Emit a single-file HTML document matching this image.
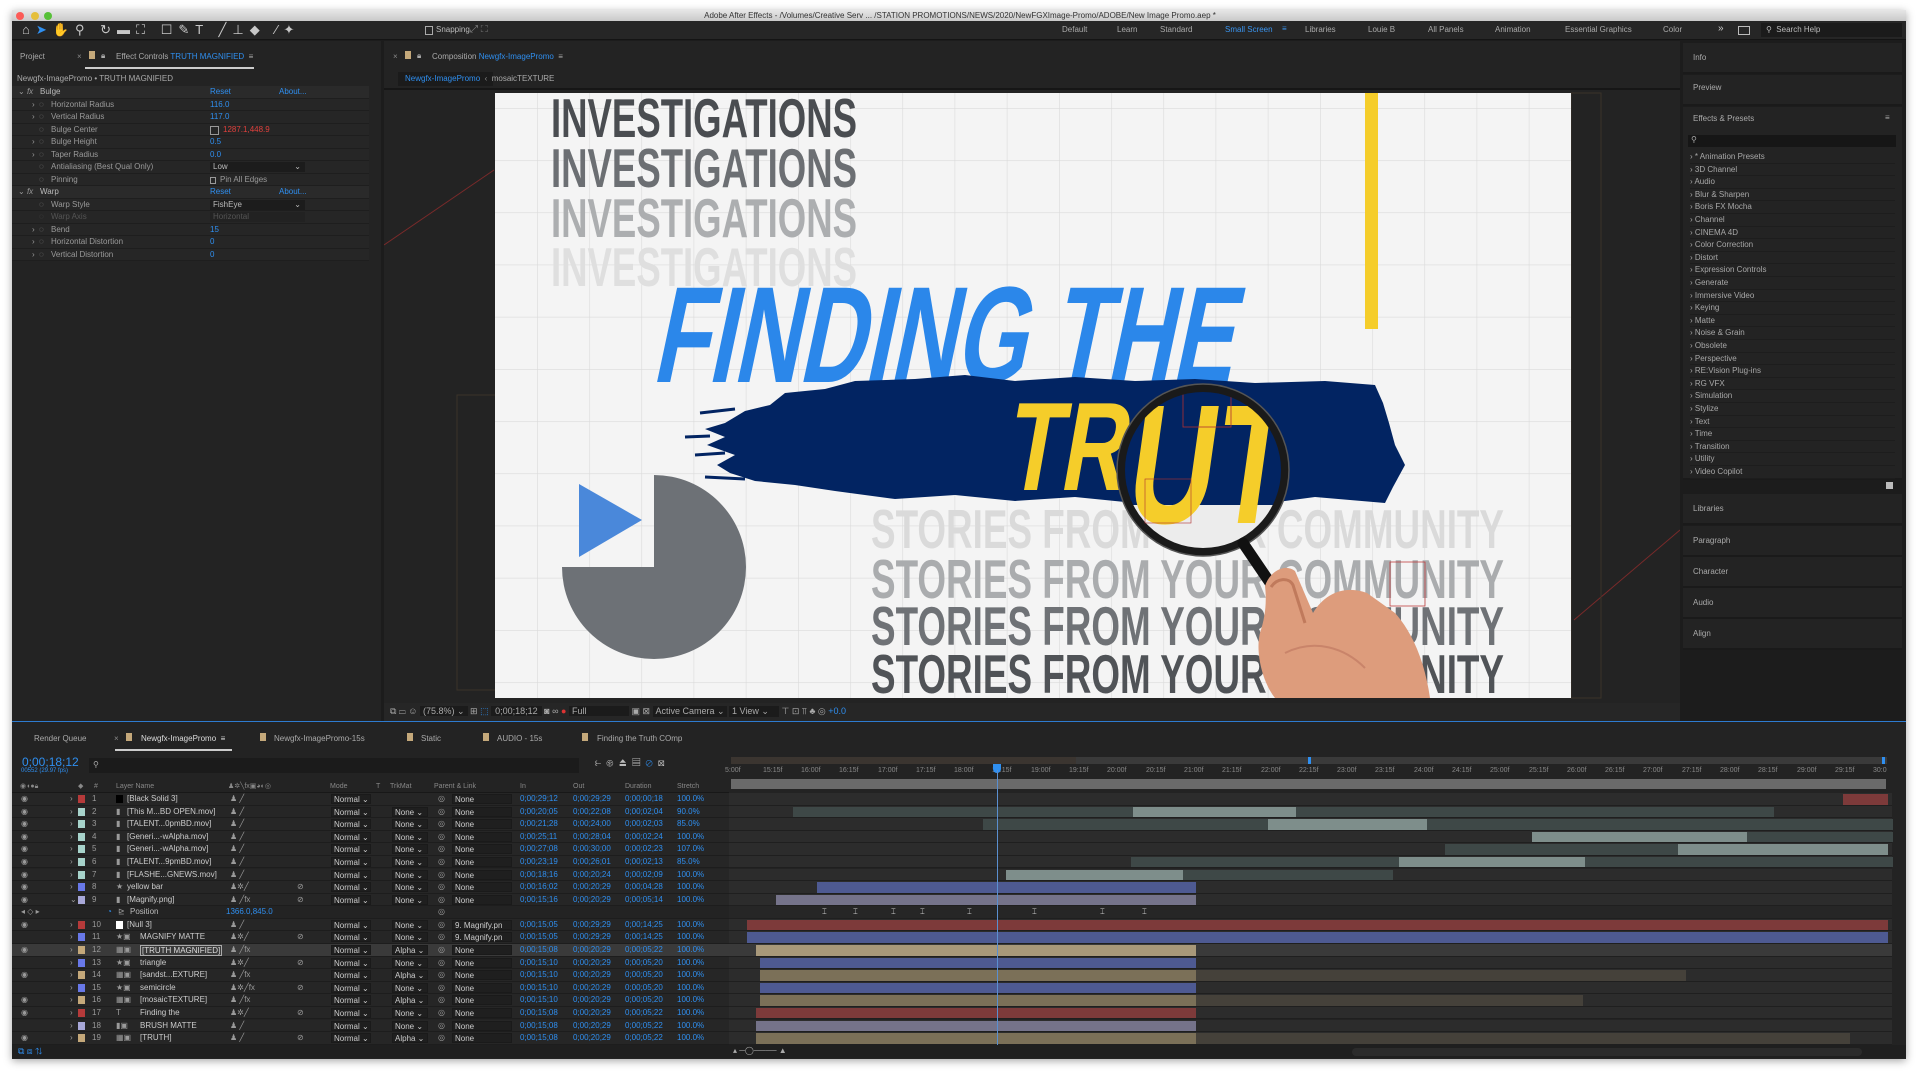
<!DOCTYPE html>
<html><head><meta charset="utf-8">
<style>
*{margin:0;padding:0;box-sizing:border-box}
body{width:1920px;height:1074px;background:#fff;position:relative;overflow:hidden;font-family:"Liberation Sans",sans-serif;font-size:8px;color:#9a9a9a}
.a{position:absolute;white-space:nowrap}
.win{position:absolute;left:12px;top:10px;width:1894px;height:1049px;background:#1c1c1c;box-shadow:0 2px 8px rgba(0,0,0,.35)}
.b{color:#2f8ff0}
.lr{position:absolute;left:12px;width:717px;height:12.58px;line-height:12.58px;background:#262626;border-bottom:1px solid #1d1d1d}
.gr{position:absolute;left:729px;width:1163px;height:12.58px;background:#2c2c2c;border-bottom:1px solid #1f1f1f}
.bar{position:absolute;top:1px;height:10.5px}
.lr span{position:absolute;white-space:nowrap}
.sw{width:7px;height:8px;top:2px}
.dd{border:1px solid #1a1a1a;background:#1f1f1f;height:10px;top:1px;line-height:9px;padding-left:2px;color:#ccc}
.lr .e{left:9px}.lr .t{left:58px}.lr .c{left:66px}.lr .n{left:80px}.lr .i{left:104px}.lr .nm{left:115px;color:#ccc}.lr .nm2{left:128px;color:#ccc}
.lr .s{left:218px}.lr .m{left:319px;width:40px}.lr .k{left:380px;width:36px}.lr .p{left:426px}.lr .pd{left:440px;width:60px}
.lr .ti{left:508px;color:#2f8ff0}.lr .to{left:561px;color:#2f8ff0}.lr .td{left:613px;color:#2f8ff0}.lr .ts{left:665px;color:#2f8ff0}
.rp{position:absolute;left:1683px;width:219px;border-bottom:2px solid #1a1a1a;background:#232323}
.ep{position:absolute;left:1690px;width:205px;height:12.6px;line-height:12.6px;border-bottom:1px solid #1d1d1d;color:#a8a8a8}
.ec{position:absolute;left:12px;width:357px;height:12.57px;line-height:12.57px;background:#262626;border-bottom:1px solid #1e1e1e}
.ec span{position:absolute;white-space:nowrap}
</style></head><body>
<div class="win"></div>
<div class="a" style="left:12px;top:10px;width:1894px;height:11px;background:linear-gradient(#e6e6e6,#c9c9c9)"></div>
<div class="a" style="left:16px;top:12px;width:8px;height:8px;border-radius:50%;background:#fc5b57"></div>
<div class="a" style="left:31px;top:12px;width:8px;height:8px;border-radius:50%;background:#e5bf3c"></div>
<div class="a" style="left:44px;top:12px;width:8px;height:8px;border-radius:50%;background:#57c038"></div>
<div class="a" style="left:0;width:1920px;top:10px;text-align:center;font-size:8px;color:#333;line-height:11px">Adobe After Effects - /Volumes/Creative Serv ... /STATION PROMOTIONS/NEWS/2020/NewFGXImage-Promo/ADOBE/New Image Promo.aep *</div>
<div class="a" style="left:12px;top:21px;width:1894px;height:19px;background:#262626;border-bottom:1px solid #141414"></div>
<div class="a" style="left:22px;top:22px;font-size:13px;color:#c8c8c8;letter-spacing:6px">⌂<span style="color:#2f8ff0">➤</span>✋⚲ ↻▬⛶ ☐✎T ╱⊥◆ ⁄✦</div>
<div class="a" style="left:425px;top:26px;width:8px;height:9px;border:1px solid #aaa"></div>
<div class="a" style="left:436px;top:25px;color:#bbb">Snapping</div>
<div class="a" style="left:470px;top:24px;color:#888;font-size:10px">⤢ ⛶</div>
<div class="a" style="left:1062px;top:25px;color:#aaa">Default</div>
<div class="a" style="left:1117px;top:25px;color:#aaa">Learn</div>
<div class="a" style="left:1160px;top:25px;color:#aaa">Standard</div>
<div class="a" style="left:1225px;top:25px;color:#3a95f0">Small Screen</div>
<div class="a" style="left:1282px;top:24px;color:#3a95f0">≡</div>
<div class="a" style="left:1305px;top:25px;color:#aaa">Libraries</div>
<div class="a" style="left:1368px;top:25px;color:#aaa">Louie B</div>
<div class="a" style="left:1428px;top:25px;color:#aaa">All Panels</div>
<div class="a" style="left:1495px;top:25px;color:#aaa">Animation</div>
<div class="a" style="left:1565px;top:25px;color:#aaa">Essential Graphics</div>
<div class="a" style="left:1663px;top:25px;color:#aaa">Color</div>
<div class="a" style="left:1718px;top:23px;color:#ccc;font-size:10px">»</div>
<div class="a" style="left:1738px;top:26px;width:12px;height:9px;border:1px solid #bbb"></div>
<div class="a" style="left:1761px;top:23px;width:141px;height:14px;background:#1b1b1b"></div>
<div class="a" style="left:1766px;top:25px;color:#bbb">⚲&nbsp; Search Help</div>

<!-- LEFT PANEL -->
<div class="a" style="left:12px;top:41px;width:369px;height:680px;background:#232323"></div>
<div class="a" style="left:20px;top:52px;color:#aaa">Project</div>
<div class="a" style="left:77px;top:52px;color:#888">×</div>
<div class="a" style="left:89px;top:51px;width:6px;height:8px;background:#c4a87a"></div>
<div class="a" style="left:101px;top:51px;color:#aaa">&#x1F512;&#xFE0E;</div>
<div class="a" style="left:116px;top:52px;color:#aaa">Effect Controls <span class="b">TRUTH MAGNIFIED</span> &nbsp;≡</div>
<div class="a" style="left:85px;top:67px;width:169px;height:2px;background:#ccc"></div>
<div class="a" style="left:17px;top:74px;color:#aaa">Newgfx-ImagePromo • TRUTH MAGNIFIED</div>
<div class="ec" style="top:86px;background:#2a2a2a"><span style="left:6px">⌄ <i>fx</i></span><span style="left:28px;color:#bbb">Bulge</span><span style="left:198px" class="b">Reset</span><span style="left:267px" class="b">About...</span></div>
<div class="ec" style="top:98.5px"><span style="left:20px">›</span><span style="left:27px">◌</span><span style="left:39px">Horizontal Radius</span><span style="left:198px" class="b">116.0</span></div>
<div class="ec" style="top:111px"><span style="left:20px">›</span><span style="left:27px">◌</span><span style="left:39px">Vertical Radius</span><span style="left:198px" class="b">117.0</span></div>
<div class="ec" style="top:123.5px"><span style="left:27px">◌</span><span style="left:39px">Bulge Center</span><span style="left:198px;top:2px;width:9px;height:9px;border:1px solid #999"></span><span style="left:211px;color:#e0403c">1287.1,448.9</span></div>
<div class="ec" style="top:136px"><span style="left:20px">›</span><span style="left:27px">◌</span><span style="left:39px">Bulge Height</span><span style="left:198px" class="b">0.5</span></div>
<div class="ec" style="top:148.5px"><span style="left:20px">›</span><span style="left:27px">◌</span><span style="left:39px">Taper Radius</span><span style="left:198px" class="b">0.0</span></div>
<div class="ec" style="top:161px"><span style="left:27px">◌</span><span style="left:39px">Antialiasing (Best Qual Only)</span><span style="left:198px;top:1px;width:95px;height:10px;background:#1c1c1c;line-height:10px;padding-left:3px;color:#bbb">Low<b style="position:absolute;right:4px;font-weight:normal">⌄</b></span></div>
<div class="ec" style="top:173.5px"><span style="left:27px">◌</span><span style="left:39px">Pinning</span><span style="left:198px;top:3px;width:6px;height:7px;border:1px solid #999"></span><span style="left:208px">Pin All Edges</span></div>
<div class="ec" style="top:186px;background:#2a2a2a"><span style="left:6px">⌄ <i>fx</i></span><span style="left:28px;color:#bbb">Warp</span><span style="left:198px" class="b">Reset</span><span style="left:267px" class="b">About...</span></div>
<div class="ec" style="top:198.5px"><span style="left:27px">◌</span><span style="left:39px">Warp Style</span><span style="left:198px;top:1px;width:95px;height:10px;background:#1c1c1c;line-height:10px;padding-left:3px;color:#bbb">FishEye<b style="position:absolute;right:4px;font-weight:normal">⌄</b></span></div>
<div class="ec" style="top:211px;color:#555"><span style="left:27px">◌</span><span style="left:39px">Warp Axis</span><span style="left:198px;top:1px;width:95px;height:10px;background:#222;line-height:10px;padding-left:3px">Horizontal</span></div>
<div class="ec" style="top:223.5px"><span style="left:20px">›</span><span style="left:27px">◌</span><span style="left:39px">Bend</span><span style="left:198px" class="b">15</span></div>
<div class="ec" style="top:236px"><span style="left:20px">›</span><span style="left:27px">◌</span><span style="left:39px">Horizontal Distortion</span><span style="left:198px" class="b">0</span></div>
<div class="ec" style="top:248.5px"><span style="left:20px">›</span><span style="left:27px">◌</span><span style="left:39px">Vertical Distortion</span><span style="left:198px" class="b">0</span></div>

<!-- COMP PANEL -->
<div class="a" style="left:384px;top:41px;width:1296px;height:680px;background:#232323"></div>
<div class="a" style="left:393px;top:52px;color:#888">×</div>
<div class="a" style="left:405px;top:51px;width:6px;height:8px;background:#c4a87a"></div>
<div class="a" style="left:417px;top:51px;color:#aaa">&#x1F512;&#xFE0E;</div>
<div class="a" style="left:432px;top:52px;color:#aaa">Composition <span class="b">Newgfx-ImagePromo</span> &nbsp;≡</div>
<div class="a" style="left:398px;top:72px;width:95px;height:14px;background:#1b1b1b"></div>
<div class="a" style="left:405px;top:74px"><span class="b">Newgfx-ImagePromo</span> &nbsp;<span style="color:#888">‹</span>&nbsp; <span style="color:#aaa">mosaicTEXTURE</span></div>
<div class="a" style="left:384px;top:88px;width:1296px;height:2px;background:#161616"></div>
<svg class="a" style="left:384px;top:90px" width="1296" height="612">
 <line x1="0" y1="155" x2="110" y2="80" stroke="#7a2a2a" stroke-width="1"/>
 <line x1="1190" y1="530" x2="1296" y2="440" stroke="#7a2a2a" stroke-width="1"/>
 <rect x="73" y="305" width="40" height="295" fill="none" stroke="#3b3328" stroke-width="1"/>
 <rect x="1187" y="3" width="30" height="605" fill="none" stroke="#3b3328" stroke-width="1"/>
</svg>
<svg class="a" style="left:495px;top:93px" width="1076" height="605" viewBox="0 0 1076 605">
 <defs>
  <pattern id="g" x="42" y="15" width="52.2" height="52.2" patternUnits="userSpaceOnUse"><path d="M0 0H52.2M0 0V52.2" stroke="#dadada" stroke-width="1.2" fill="none"/></pattern>
  <clipPath id="lens"><circle cx="708" cy="377" r="80"/></clipPath>
 </defs>
 <rect width="1076" height="605" fill="#f4f4f4"/>
 <rect width="1076" height="605" fill="url(#g)"/>
 <g font-family="Liberation Sans" font-weight="bold" font-size="55">
  <text x="56" y="44" textLength="306" lengthAdjust="spacingAndGlyphs" fill="#4a4d51">INVESTIGATIONS</text>
  <text x="56" y="94" textLength="306" lengthAdjust="spacingAndGlyphs" fill="#6c6f73">INVESTIGATIONS</text>
  <text x="56" y="144" textLength="306" lengthAdjust="spacingAndGlyphs" fill="#acaeb0">INVESTIGATIONS</text>
  <text x="56" y="193" textLength="306" lengthAdjust="spacingAndGlyphs" fill="#dfdfdf">INVESTIGATIONS</text>
 </g>
 <rect x="870" y="0" width="13" height="236" fill="#f5cd2a"/>
 <path d="M159 474 L159 382 A92 92 0 1 1 67 474 Z" fill="#6d7176"/>
 <polygon points="84,391 147,427 84,464" fill="#4a88da"/>
 <g font-family="Liberation Sans" font-weight="bold" font-size="55">
  <text x="376" y="455" textLength="633" lengthAdjust="spacingAndGlyphs" fill="#dadada">STORIES FROM YOUR COMMUNITY</text>
  <text x="376" y="505" textLength="633" lengthAdjust="spacingAndGlyphs" fill="#aaacae">STORIES FROM YOUR COMMUNITY</text>
  <text x="376" y="552" textLength="633" lengthAdjust="spacingAndGlyphs" fill="#6f7276">STORIES FROM YOUR COMMUNITY</text>
  <text x="376" y="600" textLength="633" lengthAdjust="spacingAndGlyphs" fill="#505357">STORIES FROM YOUR COMMUNITY</text>
 </g>
 <g transform="translate(156,289) skewX(-12)">
  <text x="0" y="0" font-family="Liberation Sans" font-weight="bold" font-size="137" textLength="580" lengthAdjust="spacingAndGlyphs" fill="#2b87ea">FINDING THE</text>
 </g>
 <path d="M230 330 L250 318 L275 312 L290 300 L330 296 L360 288 L420 286 L470 282 L520 288 L580 284 L640 288 L700 286 L760 290 L830 288 L880 292 L888 310 L894 330 L900 352 L910 372 L898 394 L890 410 L820 404 L760 412 L700 402 L640 410 L580 404 L520 408 L460 402 L400 406 L340 398 L300 392 L260 388 L235 380 L222 372 L240 362 L212 352 L230 344 L210 336 Z" fill="#022462"/>
 <path d="M205 320 L240 316 M200 362 L230 360 M210 384 L250 386 M190 344 L215 343" stroke="#022462" stroke-width="3"/>
 <g transform="translate(508,397) skewX(-10)">
  <text x="0" y="0" font-family="Liberation Sans" font-weight="bold" font-size="126" textLength="120" lengthAdjust="spacingAndGlyphs" fill="#f5cd2a">TR</text>
 </g>
 <g clip-path="url(#lens)">
  <rect x="620" y="290" width="180" height="180" fill="#022462"/>
  <rect x="620" y="412" width="180" height="60" fill="#ececec"/>
  <g transform="translate(628,430) skewX(-8)">
   <text x="0" y="0" font-family="Liberation Sans" font-weight="bold" font-size="170" textLength="160" lengthAdjust="spacingAndGlyphs" fill="#f5cd2a">UT</text>
  </g>
  <rect x="688" y="292" width="48" height="42" fill="none" stroke="#b03030" stroke-width="0.8"/>
 </g>
 <circle cx="708" cy="377" r="82" fill="none" stroke="#1a1a1a" stroke-width="8"/>
 <circle cx="708" cy="377" r="86" fill="none" stroke="#555" stroke-width="1.5"/>
 <path d="M748 450 L782 500" stroke="#111" stroke-width="11" stroke-linecap="round"/>
 <path d="M770 493 C775 478 790 470 800 478 L818 520 C830 500 850 492 872 500 L900 520 C918 540 930 570 935 605 L780 605 C768 590 760 560 765 540 C770 525 772 510 770 493 Z" fill="#dd9c7c"/>
 <path d="M776 494 C782 485 794 484 798 492 L810 530" stroke="#c07a5c" stroke-width="3" fill="none"/>
 <path d="M790 560 C820 545 850 555 870 575" stroke="#c9846a" stroke-width="2" fill="none"/>
 <rect x="650" y="386" width="46" height="44" fill="none" stroke="#b03030" stroke-width="0.6"/>
 <rect x="895" y="469" width="35" height="44" fill="none" stroke="#c04040" stroke-width="0.8"/>
</svg>
<div class="a" style="left:384px;top:703px;width:1296px;height:18px;background:#262626"></div>
<div class="a" style="left:390px;top:706px;color:#aaa;font-size:9px">⧉ ▭ ☺ <span style="background:#1b1b1b;padding:0 3px">(75.8%) ⌄</span> ⊞ <span class="b">⬚</span> <span style="background:#1b1b1b;padding:0 4px">0;00;18;12</span> ◙ ∞ <span style="color:#d33">●</span> <span style="display:inline-block;width:60px;background:#1b1b1b;padding-left:3px">Full</span> ▣ ⊠ <span style="display:inline-block;width:74px;background:#1b1b1b;padding-left:3px">Active Camera ⌄</span> <span style="display:inline-block;width:50px;background:#1b1b1b;padding-left:3px">1 View ⌄</span> ⊤ ⊡ ⫪ ♣ ◎ <span class="b">+0.0</span></div>

<!-- RIGHT PANEL -->
<div class="a" style="left:1683px;top:41px;width:223px;height:680px;background:#1c1c1c"></div>
<div class="rp" style="top:43px;height:31px"><span class="a" style="left:10px;top:10px;color:#aaa">Info</span></div>
<div class="rp" style="top:75px;height:31px"><span class="a" style="left:10px;top:8px;color:#aaa">Preview</span></div>
<div class="rp" style="top:107px;height:373px"><span class="a" style="left:10px;top:7px;color:#aaa">Effects &amp; Presets</span><span class="a" style="left:202px;top:6px;color:#aaa">≡</span>
<div class="a" style="left:5px;top:28px;width:208px;height:12px;background:#161616"></div><span class="a" style="left:8px;top:28px;color:#aaa">⚲</span></div>
<div class="ep" style="top:151px">› * Animation Presets</div>
<div class="ep" style="top:163.6px">› 3D Channel</div>
<div class="ep" style="top:176.2px">› Audio</div>
<div class="ep" style="top:188.8px">› Blur &amp; Sharpen</div>
<div class="ep" style="top:201.4px">› Boris FX Mocha</div>
<div class="ep" style="top:214px">› Channel</div>
<div class="ep" style="top:226.6px">› CINEMA 4D</div>
<div class="ep" style="top:239.2px">› Color Correction</div>
<div class="ep" style="top:251.8px">› Distort</div>
<div class="ep" style="top:264.4px">› Expression Controls</div>
<div class="ep" style="top:277px">› Generate</div>
<div class="ep" style="top:289.6px">› Immersive Video</div>
<div class="ep" style="top:302.2px">› Keying</div>
<div class="ep" style="top:314.8px">› Matte</div>
<div class="ep" style="top:327.4px">› Noise &amp; Grain</div>
<div class="ep" style="top:340px">› Obsolete</div>
<div class="ep" style="top:352.6px">› Perspective</div>
<div class="ep" style="top:365.2px">› RE:Vision Plug-ins</div>
<div class="ep" style="top:377.8px">› RG VFX</div>
<div class="ep" style="top:390.4px">› Simulation</div>
<div class="ep" style="top:403px">› Stylize</div>
<div class="ep" style="top:415.6px">› Text</div>
<div class="ep" style="top:428.2px">› Time</div>
<div class="ep" style="top:440.8px">› Transition</div>
<div class="ep" style="top:453.4px">› Utility</div>
<div class="ep" style="top:466px">› Video Copilot</div>
<div class="a" style="left:1886px;top:482px;width:7px;height:7px;background:#bbb"></div>
<div class="rp" style="top:494px;height:31px"><span class="a" style="left:10px;top:10px;color:#aaa">Libraries</span></div>
<div class="rp" style="top:526px;height:31px"><span class="a" style="left:10px;top:10px;color:#aaa">Paragraph</span></div>
<div class="rp" style="top:557px;height:31px"><span class="a" style="left:10px;top:10px;color:#aaa">Character</span></div>
<div class="rp" style="top:588px;height:31px"><span class="a" style="left:10px;top:10px;color:#aaa">Audio</span></div>
<div class="rp" style="top:619px;height:31px"><span class="a" style="left:10px;top:10px;color:#aaa">Align</span></div>

<!-- TIMELINE -->
<div class="a" style="left:12px;top:721px;width:1894px;height:338px;background:#232323;border-top:1px solid #2d7bd0"></div>
<div class="a" style="left:34px;top:734px;color:#aaa">Render Queue</div>
<div class="a" style="left:114px;top:734px;color:#888">×</div>
<div class="a" style="left:126px;top:733px;width:6px;height:8px;background:#c4a87a"></div>
<div class="a" style="left:141px;top:734px;color:#ddd">Newgfx-ImagePromo &nbsp;≡</div>
<div class="a" style="left:115px;top:749px;width:117px;height:2px;background:#ccc"></div>
<div class="a" style="left:260px;top:733px;width:6px;height:8px;background:#c4a87a"></div><div class="a" style="left:274px;top:734px;color:#aaa">Newgfx-ImagePromo-15s</div>
<div class="a" style="left:407px;top:733px;width:6px;height:8px;background:#c4a87a"></div><div class="a" style="left:421px;top:734px;color:#aaa">Static</div>
<div class="a" style="left:483px;top:733px;width:6px;height:8px;background:#c4a87a"></div><div class="a" style="left:497px;top:734px;color:#aaa">AUDIO - 15s</div>
<div class="a" style="left:582px;top:733px;width:6px;height:8px;background:#c4a87a"></div><div class="a" style="left:597px;top:734px;color:#aaa">Finding the Truth COmp</div>
<div class="a" style="left:22px;top:755px;color:#2f8ff0;font-size:12px">0;00;18;12</div>
<div class="a" style="left:21px;top:768px;color:#2f8ff0;font-size:6px">00552 (29.97 fps)</div>
<div class="a" style="left:89px;top:758px;width:490px;height:15px;background:#1b1b1b"></div>
<div class="a" style="left:93px;top:760px;color:#aaa">⚲</div>
<div class="a" style="left:595px;top:757px;color:#bbb;font-size:11px;letter-spacing:5px">⥼⊛⏏▤<span class="b">⊘</span>⊠</div>
<div class="a" style="left:12px;top:780px;width:717px;height:13px;background:#232323;border-bottom:1px solid #181818;color:#888;font-size:7px;line-height:13px">
<span class="a" style="left:8px">◉◖●🔒&#xFE0E;</span><span class="a" style="left:66px">◆</span><span class="a" style="left:82px">#</span><span class="a" style="left:104px">Layer Name</span><span class="a" style="left:216px">♟✲╲fx▣◕◐◎</span><span class="a" style="left:318px">Mode</span><span class="a" style="left:364px">T</span><span class="a" style="left:378px">TrkMat</span><span class="a" style="left:422px">Parent &amp; Link</span><span class="a" style="left:508px">In</span><span class="a" style="left:561px">Out</span><span class="a" style="left:613px">Duration</span><span class="a" style="left:665px">Stretch</span></div>
<div class="a" style="left:729px;top:755px;width:1163px;height:38px;background:#232323"></div>
<div class="a" style="left:731px;top:757px;width:1156px;height:7px;background:#3a3a3a"></div>
<div class="a" style="left:731px;top:757px;width:345px;height:7px;background:#3b3530"></div>
<div class="a" style="left:1308px;top:757px;width:3px;height:7px;background:#2f8ff0"></div>
<div class="a" style="left:1882px;top:757px;width:3px;height:7px;background:#2f8ff0"></div>
<div class="a" style="left:729px;top:766px;font-size:7px;color:#888;line-height:9px">
<span class="a" style="left:-4px">5:00f</span><span class="a" style="left:34px">15:15f</span><span class="a" style="left:72px">16:00f</span><span class="a" style="left:110px">16:15f</span><span class="a" style="left:149px">17:00f</span><span class="a" style="left:187px">17:15f</span><span class="a" style="left:225px">18:00f</span><span class="a" style="left:263px">18:15f</span><span class="a" style="left:302px">19:00f</span><span class="a" style="left:340px">19:15f</span><span class="a" style="left:378px">20:00f</span><span class="a" style="left:417px">20:15f</span><span class="a" style="left:455px">21:00f</span><span class="a" style="left:493px">21:15f</span><span class="a" style="left:532px">22:00f</span><span class="a" style="left:570px">22:15f</span><span class="a" style="left:608px">23:00f</span><span class="a" style="left:646px">23:15f</span><span class="a" style="left:685px">24:00f</span><span class="a" style="left:723px">24:15f</span><span class="a" style="left:761px">25:00f</span><span class="a" style="left:800px">25:15f</span><span class="a" style="left:838px">26:00f</span><span class="a" style="left:876px">26:15f</span><span class="a" style="left:914px">27:00f</span><span class="a" style="left:953px">27:15f</span><span class="a" style="left:991px">28:00f</span><span class="a" style="left:1029px">28:15f</span><span class="a" style="left:1068px">29:00f</span><span class="a" style="left:1106px">29:15f</span><span class="a" style="left:1144px">30:0</span></div>
<div class="a" style="left:731px;top:779px;width:1155px;height:10px;background:#6a6a6a"></div>
<div class="a" style="left:993px;top:764px;width:8px;height:9px;background:#2f8ff0;border-radius:0 0 4px 4px"></div>

<!-- layer rows left -->
<div class="lr" style="top:793px"><span class="e">◉</span><span class="t">›</span><span class="sw c" style="background:#b53a3a"></span><span class="n">1</span><span class="sw" style="left:104px;background:#000"></span><span class="nm">[Black Solid 3]</span><span class="s">♟ ╱</span><span class="dd m">Normal ⌄</span><span class="p">◎</span><span class="dd pd">None</span><span class="ti">0;00;29;12</span><span class="to">0;00;29;29</span><span class="td">0;00;00;18</span><span class="ts">100.0%</span></div>
<div class="lr" style="top:805.6px"><span class="e">◉</span><span class="t">›</span><span class="sw c" style="background:#a7d3cb"></span><span class="n">2</span><span class="i">▮</span><span class="nm">[This M...BD OPEN.mov]</span><span class="s">♟ ╱</span><span class="dd m">Normal ⌄</span><span class="dd k">None ⌄</span><span class="p">◎</span><span class="dd pd">None</span><span class="ti">0;00;20;05</span><span class="to">0;00;22;08</span><span class="td">0;00;02;04</span><span class="ts">90.0%</span></div>
<div class="lr" style="top:818.2px"><span class="e">◉</span><span class="t">›</span><span class="sw c" style="background:#a7d3cb"></span><span class="n">3</span><span class="i">▮</span><span class="nm">[TALENT...0pmBD.mov]</span><span class="s">♟ ╱</span><span class="dd m">Normal ⌄</span><span class="dd k">None ⌄</span><span class="p">◎</span><span class="dd pd">None</span><span class="ti">0;00;21;28</span><span class="to">0;00;24;00</span><span class="td">0;00;02;03</span><span class="ts">85.0%</span></div>
<div class="lr" style="top:830.8px"><span class="e">◉</span><span class="t">›</span><span class="sw c" style="background:#a7d3cb"></span><span class="n">4</span><span class="i">▮</span><span class="nm">[Generi...-wAlpha.mov]</span><span class="s">♟ ╱</span><span class="dd m">Normal ⌄</span><span class="dd k">None ⌄</span><span class="p">◎</span><span class="dd pd">None</span><span class="ti">0;00;25;11</span><span class="to">0;00;28;04</span><span class="td">0;00;02;24</span><span class="ts">100.0%</span></div>
<div class="lr" style="top:843.3px"><span class="e">◉</span><span class="t">›</span><span class="sw c" style="background:#a7d3cb"></span><span class="n">5</span><span class="i">▮</span><span class="nm">[Generi...-wAlpha.mov]</span><span class="s">♟ ╱</span><span class="dd m">Normal ⌄</span><span class="dd k">None ⌄</span><span class="p">◎</span><span class="dd pd">None</span><span class="ti">0;00;27;08</span><span class="to">0;00;30;00</span><span class="td">0;00;02;23</span><span class="ts">107.0%</span></div>
<div class="lr" style="top:855.9px"><span class="e">◉</span><span class="t">›</span><span class="sw c" style="background:#a7d3cb"></span><span class="n">6</span><span class="i">▮</span><span class="nm">[TALENT...9pmBD.mov]</span><span class="s">♟ ╱</span><span class="dd m">Normal ⌄</span><span class="dd k">None ⌄</span><span class="p">◎</span><span class="dd pd">None</span><span class="ti">0;00;23;19</span><span class="to">0;00;26;01</span><span class="td">0;00;02;13</span><span class="ts">85.0%</span></div>
<div class="lr" style="top:868.5px"><span class="e">◉</span><span class="t">›</span><span class="sw c" style="background:#a7d3cb"></span><span class="n">7</span><span class="i">▮</span><span class="nm">[FLASHE...GNEWS.mov]</span><span class="s">♟ ╱</span><span class="dd m">Normal ⌄</span><span class="dd k">None ⌄</span><span class="p">◎</span><span class="dd pd">None</span><span class="ti">0;00;18;16</span><span class="to">0;00;20;24</span><span class="td">0;00;02;09</span><span class="ts">100.0%</span></div>
<div class="lr" style="top:881.1px"><span class="e">◉</span><span class="t">›</span><span class="sw c" style="background:#6878e8"></span><span class="n">8</span><span class="i">★</span><span class="nm">yellow bar</span><span class="s">♟✲╱</span><span style="left:285px">⊘</span><span class="dd m">Normal ⌄</span><span class="dd k">None ⌄</span><span class="p">◎</span><span class="dd pd">None</span><span class="ti">0;00;16;02</span><span class="to">0;00;20;29</span><span class="td">0;00;04;28</span><span class="ts">100.0%</span></div>
<div class="lr" style="top:893.7px"><span class="e">◉</span><span class="t">⌄</span><span class="sw c" style="background:#a8a8d8"></span><span class="n">9</span><span class="i">▮</span><span class="nm">[Magnify.png]</span><span class="s">♟ ╱fx</span><span style="left:285px">⊘</span><span class="dd m">Normal ⌄</span><span class="dd k">None ⌄</span><span class="p">◎</span><span class="dd pd">None</span><span class="ti">0;00;15;16</span><span class="to">0;00;20;29</span><span class="td">0;00;05;14</span><span class="ts">100.0%</span></div>
<div class="lr" style="top:906.2px;background:#232323"><span style="left:9px">◂ ◇ ▸</span><span style="left:95px;color:#2f8ff0">◔</span><span style="left:106px">⊵</span><span style="left:118px;color:#bbb">Position</span><span style="left:214px;color:#2f8ff0">1366.0,845.0</span><span class="p">◎</span></div>
<div class="lr" style="top:918.8px"><span class="e">◉</span><span class="t">›</span><span class="sw c" style="background:#b53a3a"></span><span class="n">10</span><span class="sw" style="left:104px;background:#fff"></span><span class="nm">[Null 3]</span><span class="s">♟ ╱</span><span class="dd m">Normal ⌄</span><span class="dd k">None ⌄</span><span class="p">◎</span><span class="dd pd">9. Magnify.pn</span><span class="ti">0;00;15;05</span><span class="to">0;00;29;29</span><span class="td">0;00;14;25</span><span class="ts">100.0%</span></div>
<div class="lr" style="top:931.4px"><span class="t">›</span><span class="sw c" style="background:#6878e8"></span><span class="n">11</span><span class="i">★▣</span><span class="nm2">MAGNIFY MATTE</span><span class="s">♟✲╱</span><span style="left:285px">⊘</span><span class="dd m">Normal ⌄</span><span class="dd k">None ⌄</span><span class="p">◎</span><span class="dd pd">9. Magnify.pn</span><span class="ti">0;00;15;05</span><span class="to">0;00;29;29</span><span class="td">0;00;14;25</span><span class="ts">100.0%</span></div>
<div class="lr" style="top:944px;background:#3a3a3a"><span class="e">◉</span><span class="t">›</span><span class="sw c" style="background:#c4a87a"></span><span class="n">12</span><span class="i">▦▣</span><span class="nm2" style="color:#ddd;border:1px solid #aaa;line-height:9px;top:1px;padding:0 1px">[TRUTH MAGNIFIED]</span><span class="s">♟ ╱fx</span><span class="dd m">Normal ⌄</span><span class="dd k">Alpha ⌄</span><span class="p">◎</span><span class="dd pd">None</span><span class="ti">0;00;15;08</span><span class="to">0;00;20;29</span><span class="td">0;00;05;22</span><span class="ts">100.0%</span></div>
<div class="lr" style="top:956.6px"><span class="t">›</span><span class="sw c" style="background:#6878e8"></span><span class="n">13</span><span class="i">★▣</span><span class="nm2">triangle</span><span class="s">♟✲╱</span><span style="left:285px">⊘</span><span class="dd m">Normal ⌄</span><span class="dd k">None ⌄</span><span class="p">◎</span><span class="dd pd">None</span><span class="ti">0;00;15;10</span><span class="to">0;00;20;29</span><span class="td">0;00;05;20</span><span class="ts">100.0%</span></div>
<div class="lr" style="top:969.1px"><span class="e">◉</span><span class="t">›</span><span class="sw c" style="background:#c4a87a"></span><span class="n">14</span><span class="i">▦▣</span><span class="nm2">[sandst...EXTURE]</span><span class="s">♟ ╱fx</span><span class="dd m">Normal ⌄</span><span class="dd k">Alpha ⌄</span><span class="p">◎</span><span class="dd pd">None</span><span class="ti">0;00;15;10</span><span class="to">0;00;20;29</span><span class="td">0;00;05;20</span><span class="ts">100.0%</span></div>
<div class="lr" style="top:981.7px"><span class="t">›</span><span class="sw c" style="background:#6878e8"></span><span class="n">15</span><span class="i">★▣</span><span class="nm2">semicircle</span><span class="s">♟✲╱fx</span><span style="left:285px">⊘</span><span class="dd m">Normal ⌄</span><span class="dd k">None ⌄</span><span class="p">◎</span><span class="dd pd">None</span><span class="ti">0;00;15;10</span><span class="to">0;00;20;29</span><span class="td">0;00;05;20</span><span class="ts">100.0%</span></div>
<div class="lr" style="top:994.3px"><span class="e">◉</span><span class="t">›</span><span class="sw c" style="background:#c4a87a"></span><span class="n">16</span><span class="i">▦▣</span><span class="nm2">[mosaicTEXTURE]</span><span class="s">♟ ╱fx</span><span class="dd m">Normal ⌄</span><span class="dd k">Alpha ⌄</span><span class="p">◎</span><span class="dd pd">None</span><span class="ti">0;00;15;10</span><span class="to">0;00;20;29</span><span class="td">0;00;05;20</span><span class="ts">100.0%</span></div>
<div class="lr" style="top:1006.9px"><span class="e">◉</span><span class="t">›</span><span class="sw c" style="background:#b53a3a"></span><span class="n">17</span><span class="i">T</span><span class="nm2">Finding the</span><span class="s">♟✲╱</span><span style="left:285px">⊘</span><span class="dd m">Normal ⌄</span><span class="dd k">None ⌄</span><span class="p">◎</span><span class="dd pd">None</span><span class="ti">0;00;15;08</span><span class="to">0;00;20;29</span><span class="td">0;00;05;22</span><span class="ts">100.0%</span></div>
<div class="lr" style="top:1019.5px"><span class="t">›</span><span class="sw c" style="background:#a8a8d8"></span><span class="n">18</span><span class="i">▮▣</span><span class="nm2">BRUSH MATTE</span><span class="s">♟ ╱</span><span class="dd m">Normal ⌄</span><span class="dd k">None ⌄</span><span class="p">◎</span><span class="dd pd">None</span><span class="ti">0;00;15;08</span><span class="to">0;00;20;29</span><span class="td">0;00;05;22</span><span class="ts">100.0%</span></div>
<div class="lr" style="top:1032px"><span class="e">◉</span><span class="t">›</span><span class="sw c" style="background:#c4a87a"></span><span class="n">19</span><span class="i">▦▣</span><span class="nm2">[TRUTH]</span><span class="s">♟ ╱</span><span style="left:285px">⊘</span><span class="dd m">Normal ⌄</span><span class="dd k">Alpha ⌄</span><span class="p">◎</span><span class="dd pd">None</span><span class="ti">0;00;15;08</span><span class="to">0;00;20;29</span><span class="td">0;00;05;22</span><span class="ts">100.0%</span></div>

<!-- graph rows -->
<div class="gr" style="top:793px"><div class="bar" style="left:1114px;width:45px;background:#7d3a3a"></div></div>
<div class="gr" style="top:805.6px"><div class="bar" style="left:64px;width:981px;background:#3e4847"></div><div class="bar" style="left:404px;width:163px;background:#7e8e8b"></div></div>
<div class="gr" style="top:818.2px"><div class="bar" style="left:254px;width:910px;background:#3e4847"></div><div class="bar" style="left:539px;width:159px;background:#7e8e8b"></div></div>
<div class="gr" style="top:830.8px"><div class="bar" style="left:803px;width:361px;background:#3e4847"></div><div class="bar" style="left:803px;width:215px;background:#7e8e8b"></div></div>
<div class="gr" style="top:843.3px"><div class="bar" style="left:716px;width:443px;background:#3e4847"></div><div class="bar" style="left:949px;width:210px;background:#7e8e8b"></div></div>
<div class="gr" style="top:855.9px"><div class="bar" style="left:402px;width:762px;background:#3e4847"></div><div class="bar" style="left:670px;width:186px;background:#7e8e8b"></div></div>
<div class="gr" style="top:868.5px"><div class="bar" style="left:277px;width:387px;background:#3e4847"></div><div class="bar" style="left:277px;width:177px;background:#7e8e8b"></div></div>
<div class="gr" style="top:881.1px"><div class="bar" style="left:88px;width:379px;background:#4e5a92"></div></div>
<div class="gr" style="top:893.7px"><div class="bar" style="left:47px;width:420px;background:#75738a"></div></div>
<div class="gr" style="top:906.2px;background:#262626;color:#ccc;font-size:8px;line-height:12px"><span class="a" style="left:93px">⌶</span><span class="a" style="left:124px">⌶</span><span class="a" style="left:162px">⌶</span><span class="a" style="left:191px">⌶</span><span class="a" style="left:238px">⌶</span><span class="a" style="left:303px">⌶</span><span class="a" style="left:371px">⌶</span><span class="a" style="left:413px">⌶</span></div>
<div class="gr" style="top:918.8px"><div class="bar" style="left:18px;width:1141px;background:#7d3a3a"></div></div>
<div class="gr" style="top:931.4px"><div class="bar" style="left:18px;width:1141px;background:#4e5a92"></div></div>
<div class="gr" style="top:944px;background:#3a3a3a"><div class="bar" style="left:27px;width:440px;background:#a8987a"></div></div>
<div class="gr" style="top:956.6px"><div class="bar" style="left:31px;width:436px;background:#4e5a92"></div></div>
<div class="gr" style="top:969.1px"><div class="bar" style="left:467px;width:490px;background:#45413a"></div><div class="bar" style="left:31px;width:436px;background:#7b7058"></div></div>
<div class="gr" style="top:981.7px"><div class="bar" style="left:31px;width:436px;background:#4e5a92"></div></div>
<div class="gr" style="top:994.3px"><div class="bar" style="left:467px;width:387px;background:#45413a"></div><div class="bar" style="left:31px;width:436px;background:#7b7058"></div></div>
<div class="gr" style="top:1006.9px"><div class="bar" style="left:27px;width:440px;background:#7d3a3a"></div></div>
<div class="gr" style="top:1019.5px"><div class="bar" style="left:27px;width:440px;background:#75738a"></div></div>
<div class="gr" style="top:1032px"><div class="bar" style="left:467px;width:654px;background:#45413a"></div><div class="bar" style="left:27px;width:440px;background:#7b7058"></div></div>
<div class="a" style="left:997px;top:770px;width:1px;height:275px;background:#5a8fd0"></div>
<div class="a" style="left:12px;top:1045px;width:1894px;height:13px;background:#1f1f1f"></div>
<div class="a" style="left:18px;top:1046px;color:#2f8ff0;font-size:9px">⧉ ⧈ ⇅</div>
<div class="a" style="left:733px;top:1046px;color:#aaa;font-size:8px">▴ ─◯──── ▲</div>
<div class="a" style="left:1352px;top:1048px;width:510px;height:8px;border-radius:4px;background:#2b2b2b"></div>
</body></html>
